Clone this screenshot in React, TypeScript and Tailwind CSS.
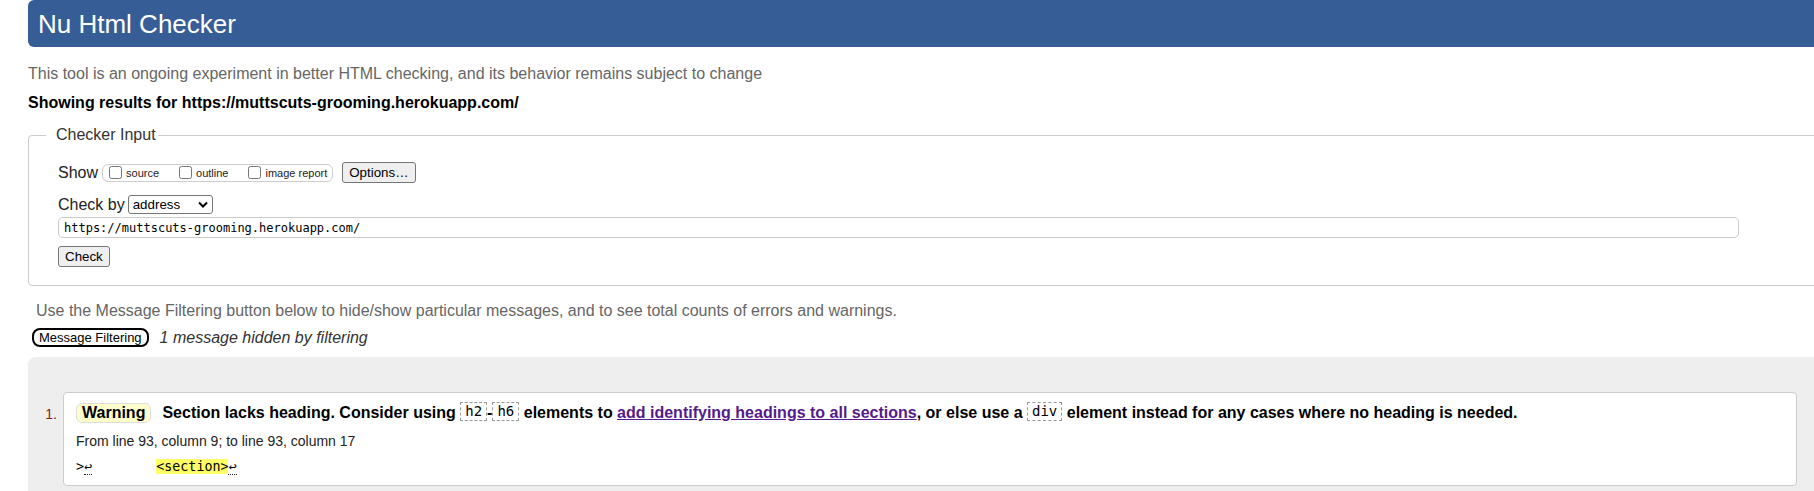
import React from "react";

const mono = "font-['DejaVu_Sans_Mono','Liberation_Mono',monospace]";

const Lf = () => <span className="border-b border-dotted border-[#222]">↩</span>;

const Code = ({ children }: { children: React.ReactNode }) => (
  <code
    className={`inline-block border border-dashed border-[#999] px-[4px] align-[2px] text-[14px] font-normal leading-[17px] ${mono}`}
  >
    {children}
  </code>
);

const Box = ({ label, first }: { label: string; first?: boolean }) => (
  <>
    <input
      type="checkbox"
      className={`m-0 h-[13px] w-[13px] ${first ? "" : "ml-[20px]"}`}
    />
    <span className="ml-[4px] mt-[2px]">{label}</span>
  </>
);

export default function App() {
  return (
    <div className="h-[491px] w-full overflow-hidden bg-white font-['Liberation_Sans',Arial,sans-serif] text-[#222]">
      <div className="ml-[28px] w-[1808px]">
        <h1 className="flex h-[47px] items-center rounded-[6px] bg-[#365d95] pl-[10px] text-[26px] leading-[30px] text-white">
          Nu Html Checker
        </h1>
        <p className="mt-[18px] text-[16px] leading-[18px] text-[#666]">
          This tool is an ongoing experiment in better HTML checking, and its behavior remains subject to change
        </p>
        <p className="mt-[11px] text-[16px] font-bold leading-[18px] text-black">
          Showing results for https://muttscuts-grooming.herokuapp.com/
        </p>

        <fieldset className="mt-[14px] rounded-[4px] border border-[#ccc] pb-[17px]">
          <legend className="ml-[17px] pl-[10px] pr-[2px] text-[16px] leading-[18px] text-[#333]">
            Checker Input
          </legend>

          <div className="pl-[29px]">
            <div className="mt-[18px] flex h-[21px] items-center">
              <span className="text-[16px] leading-[18px]">Show</span>
              <span className="ml-[4px] flex h-[18px] items-center rounded-[6px] border border-[#ccc] pl-[6px] pr-[5px] text-[11px] leading-[13px]">
                <Box label="source" first />
                <Box label="outline" />
                <Box label="image report" />
              </span>
              <button className="ml-[9px] h-[21px] rounded-[3px] border border-[#767676] bg-[#efefef] px-[6px] text-[13.33px] leading-[15px] text-black">
                Options…
              </button>
            </div>

            <div className="mt-[12px] flex h-[19px] items-center">
              <span className="text-[16px] leading-[18px]">Check by</span>
              <div className="ml-[3px] flex h-[19px] w-[85px] items-center justify-between rounded-[3px] border border-[#767676] pl-[4px] pr-[4px] text-[13.33px] leading-[15px] text-black">
                <span>address</span>
                <svg width="10" height="7" viewBox="0 0 10 7">
                  <path d="M1 1.5 L5 5.5 L9 1.5" stroke="#000" strokeWidth="2" fill="none" />
                </svg>
              </div>
            </div>

            <div
              className={`mt-[3px] flex h-[21px] w-[1681px] items-center rounded-[5px] border border-[#ccc] pl-[5px] text-[12px] text-black ${mono}`}
            >
              https://muttscuts-grooming.herokuapp.com/
            </div>

            <button className="mt-[8px] h-[21px] rounded-[3px] border border-[#767676] bg-[#efefef] px-[6px] text-[13.33px] leading-[15px] text-black">
              Check
            </button>
          </div>
        </fieldset>

        <p className="mt-[16px] pl-[8px] text-[16px] leading-[18px] text-[#666]">
          Use the Message Filtering button below to hide/show particular messages, and to see total counts of errors and warnings.
        </p>
        <div className="mt-[8px] flex h-[19px] items-center">
          <button className="ml-[4px] h-[19px] rounded-[8px] border-2 border-black bg-white px-[5px] text-[13px] leading-[15px] text-black">
            Message Filtering
          </button>
          <span className="ml-[11px] text-[16px] italic leading-[18px] text-[#333]">
            1 message hidden by filtering
          </span>
        </div>

        <div className="mt-[10px] rounded-tl-[8px] bg-[#eee] pb-[40px] pt-[35px]">
          <div className="flex items-start">
            <span className="mt-[14px] w-[35px] pr-[6px] text-right text-[14px] leading-[16px] text-[#8b1a1a]">
              1.
            </span>
            <div className="w-[1734px] rounded-[4px] border border-[#ccc] bg-white pb-[10px] pl-[12px] pt-[9px]">
              <p className="text-[16px] font-bold leading-[22px] text-black">
                <span className="mr-[11px] inline-block rounded-[6px] border border-[#ddd] bg-[#ffffcc] px-[5px] leading-[18px]">
                  Warning
                </span>
                Section lacks heading. Consider using <Code>h2</Code>-<Code>h6</Code> elements to{" "}
                <a href="#" className="text-[#551a8b] underline">
                  add identifying headings to all sections
                </a>
                , or else use a <Code>div</Code> element instead for any cases where no heading is needed.
              </p>
              <p className="mt-[8px] text-[14px] leading-[18px] text-[#222]">
                From line 93, column 9; to line 93, column 17
              </p>
              <div className={`mt-[9px] whitespace-pre text-[13.33px] leading-[16px] text-black ${mono}`}>
                {">"}
                <Lf />
                {"        "}
                <mark className="bg-[#ffff66] text-black">{"<section>"}</mark>
                <Lf />
              </div>
            </div>
          </div>
        </div>
      </div>
    </div>
  );
}
